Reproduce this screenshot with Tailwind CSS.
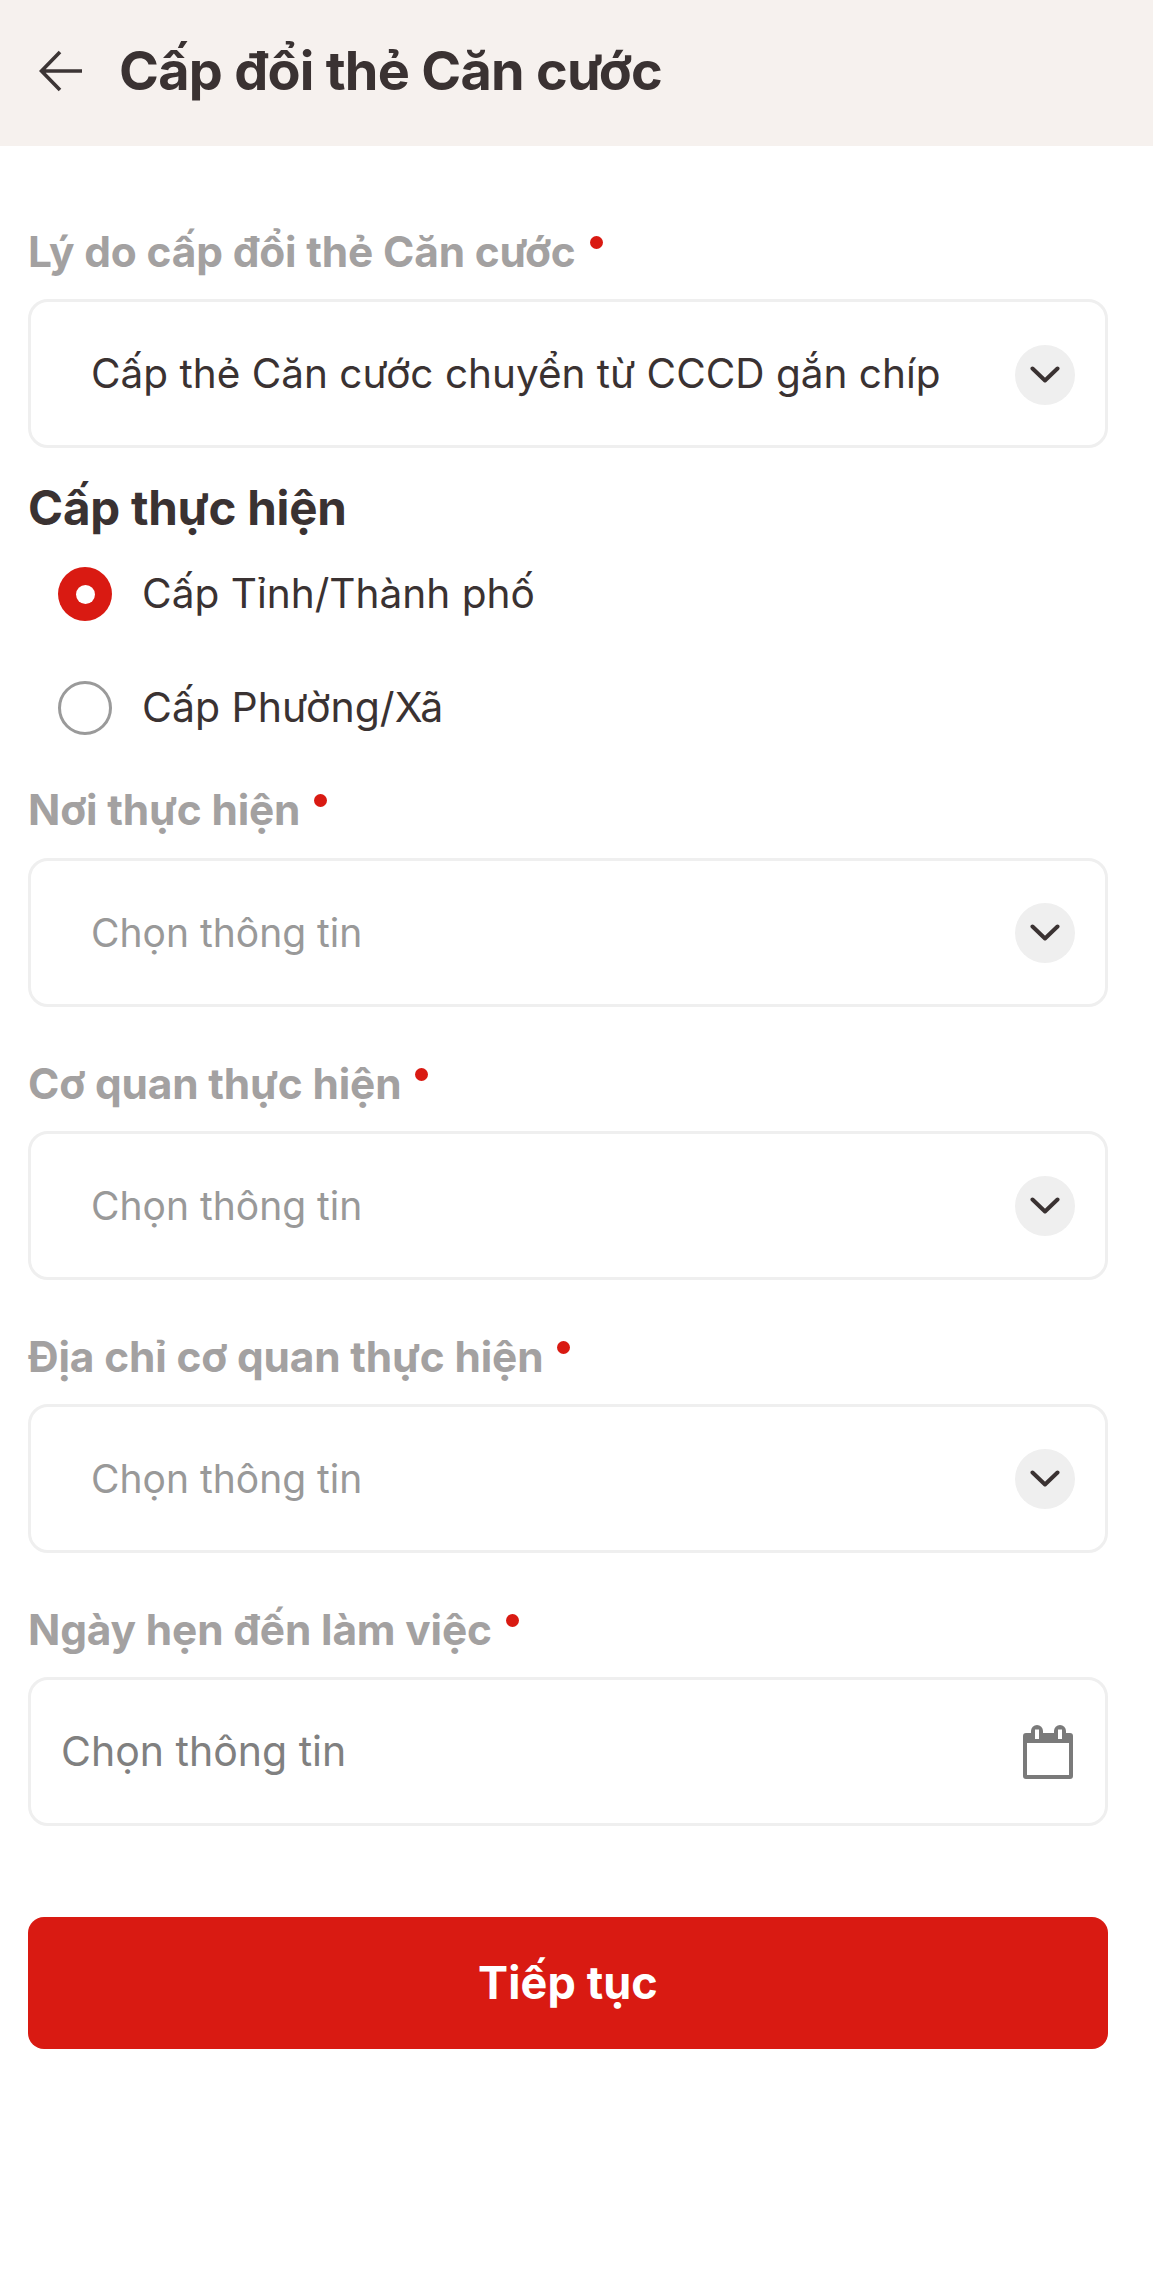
<!DOCTYPE html>
<html lang="vi">
  <head>
    <meta charset="UTF-8" />
    <meta name="viewport" content="width=device-width, initial-scale=1.0" />
    <title>Cấp đổi thẻ Căn cước</title>
    <script src="https://cdn.jsdelivr.net/npm/@tailwindcss/browser@4"></script>
  </head>
  <body class="bg-white font-['Inter','Noto_Sans',sans-serif]">
    <!-- header -->
    <header class="flex h-[146px] items-center bg-[#f6f1ee] pb-[5px] pl-[39px]">
      <svg class="h-[46px] w-[44px] text-[#3c3535]" viewBox="0 0 44 46" fill="none" stroke="currentColor" stroke-width="3.6">
        <path d="M43 23H3M21 4L2.5 23L21 42" />
      </svg>
      <h1 class="ml-[36px] text-[54px] leading-[60px] font-bold tracking-[-0.75px] text-[#3a3232]">Cấp đổi thẻ Căn cước</h1>
    </header>

    <main class="pt-[86px] pr-[45px] pl-[28px]">
      <!-- ly do -->
      <div class="flex h-[40px] items-center font-bold text-[#a3a1a1]">
        <label class="text-[42.4px] leading-[40px] tracking-[-0.15px]">Lý do cấp đổi thẻ Căn cước</label>
        <span class="mb-[20px] ml-[14px] size-[13px] rounded-full bg-[#d91a12]"></span>
      </div>
      <div class="mt-[27px] flex h-[149px] items-center justify-between rounded-[20px] border-[3px] border-[#efefef] pr-[30px] pl-[60px]">
        <span class="pt-[2px] text-[40.5px] text-[#3a3232]">Cấp thẻ Căn cước chuyển từ CCCD gắn chíp</span>
        <span class="mt-[2px] flex size-[60px] items-center justify-center rounded-full bg-[#efefef]">
          <svg class="h-[18px] w-[30px] text-[#3a3232]" viewBox="0 0 30 18" fill="none" stroke="currentColor" stroke-width="4" stroke-linecap="round" stroke-linejoin="round"><path d="M2.5 2.5L15 14.5L27.5 2.5" /></svg>
        </span>
      </div>

      <!-- cap thuc hien -->
      <h2 class="mt-[38px] text-[47.5px] leading-[44px] font-bold tracking-[-0.25px] text-[#3a3232]">Cấp thực hiện</h2>
      <div class="mt-[37px] flex h-[54px] items-center pl-[30px]">
        <span class="flex size-[54px] items-center justify-center rounded-full bg-[#d91a12]"><span class="size-[19px] rounded-full bg-white"></span></span>
        <span class="ml-[30px] text-[40.6px] text-[#3a3232]">Cấp Tỉnh/Thành phố</span>
      </div>
      <div class="mt-[60px] flex h-[54px] items-center pl-[30px]">
        <span class="size-[54px] rounded-full border-[3px] border-[#9a9a9a]"></span>
        <span class="ml-[30px] text-[41px] text-[#3a3232]">Cấp Phường/Xã</span>
      </div>

      <!-- noi thuc hien -->
      <div class="mt-[55px] flex h-[40px] items-center font-bold text-[#a3a1a1]">
        <label class="text-[42.4px] leading-[40px] tracking-[-0.15px]">Nơi thực hiện</label>
        <span class="mb-[20px] ml-[14px] size-[13px] rounded-full bg-[#d91a12]"></span>
      </div>
      <div class="mt-[28px] flex h-[149px] items-center justify-between rounded-[20px] border-[3px] border-[#efefef] pr-[30px] pl-[60px]">
        <span class="pt-[2px] text-[39px] text-[#999999]">Chọn thông tin</span>
        <span class="flex size-[60px] items-center justify-center rounded-full bg-[#efefef]">
          <svg class="h-[18px] w-[30px] text-[#3a3232]" viewBox="0 0 30 18" fill="none" stroke="currentColor" stroke-width="4" stroke-linecap="round" stroke-linejoin="round"><path d="M2.5 2.5L15 14.5L27.5 2.5" /></svg>
        </span>
      </div>

      <!-- co quan -->
      <div class="mt-[57px] flex h-[40px] items-center font-bold text-[#a3a1a1]">
        <label class="text-[42.4px] leading-[40px] tracking-[-0.15px]">Cơ quan thực hiện</label>
        <span class="mb-[20px] ml-[14px] size-[13px] rounded-full bg-[#d91a12]"></span>
      </div>
      <div class="mt-[27px] flex h-[149px] items-center justify-between rounded-[20px] border-[3px] border-[#efefef] pr-[30px] pl-[60px]">
        <span class="pt-[2px] text-[39px] text-[#999999]">Chọn thông tin</span>
        <span class="flex size-[60px] items-center justify-center rounded-full bg-[#efefef]">
          <svg class="h-[18px] w-[30px] text-[#3a3232]" viewBox="0 0 30 18" fill="none" stroke="currentColor" stroke-width="4" stroke-linecap="round" stroke-linejoin="round"><path d="M2.5 2.5L15 14.5L27.5 2.5" /></svg>
        </span>
      </div>

      <!-- dia chi -->
      <div class="mt-[57px] flex h-[40px] items-center font-bold text-[#a3a1a1]">
        <label class="text-[42.4px] leading-[40px] tracking-[-0.15px]">Địa chỉ cơ quan thực hiện</label>
        <span class="mb-[20px] ml-[14px] size-[13px] rounded-full bg-[#d91a12]"></span>
      </div>
      <div class="mt-[27px] flex h-[149px] items-center justify-between rounded-[20px] border-[3px] border-[#efefef] pr-[30px] pl-[60px]">
        <span class="pt-[2px] text-[39px] text-[#999999]">Chọn thông tin</span>
        <span class="flex size-[60px] items-center justify-center rounded-full bg-[#efefef]">
          <svg class="h-[18px] w-[30px] text-[#3a3232]" viewBox="0 0 30 18" fill="none" stroke="currentColor" stroke-width="4" stroke-linecap="round" stroke-linejoin="round"><path d="M2.5 2.5L15 14.5L27.5 2.5" /></svg>
        </span>
      </div>

      <!-- ngay hen -->
      <div class="mt-[57px] flex h-[40px] items-center font-bold text-[#a3a1a1]">
        <label class="text-[42.4px] leading-[40px] tracking-[-0.15px]">Ngày hẹn đến làm việc</label>
        <span class="mb-[20px] ml-[14px] size-[13px] rounded-full bg-[#d91a12]"></span>
      </div>
      <div class="mt-[27px] flex h-[149px] items-center justify-between rounded-[20px] border-[3px] border-[#efefef] pr-[32px] pl-[30px]">
        <span class="text-[41px] text-[#808080]">Chọn thông tin</span>
        <svg class="h-[54px] w-[50px] text-[#7a7a7a]" viewBox="0 0 50 54" fill="currentColor">
          <path fill-rule="evenodd" d="M3 8H8V6A6 6 0 0 1 20 6V8H31V6A6 6 0 0 1 43 6V8H47A3 3 0 0 1 50 11V51A3 3 0 0 1 47 54H3A3 3 0 0 1 0 51V11A3 3 0 0 1 3 8ZM4 18V50H46V18ZM12 4.5V14H16V4.5ZM35 4.5V14H39V4.5Z" />
        </svg>
      </div>

      <button class="mt-[91px] flex h-[132px] w-full items-center justify-center rounded-[16px] bg-[#d91a12] text-[45px] font-bold tracking-[0.1px] text-white">Tiếp tục</button>
    </main>
  </body>
</html>
